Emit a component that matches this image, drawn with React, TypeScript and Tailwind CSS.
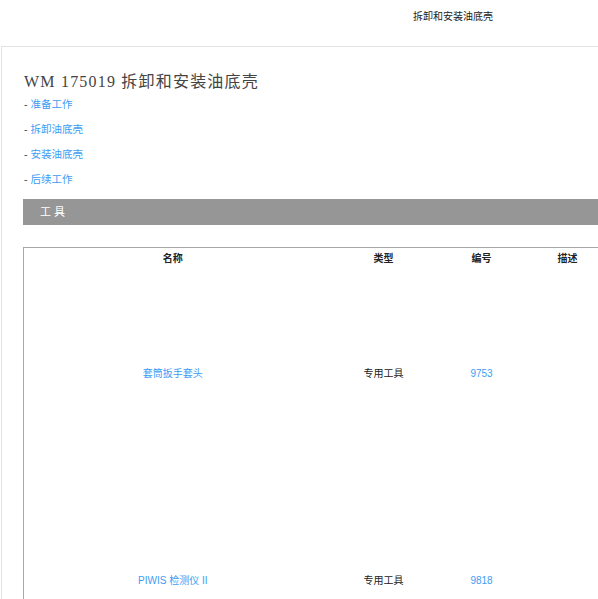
const sans = "font-['Liberation_Sans','Noto_Sans_CJK_SC',sans-serif]";

const steps = ["准备工作", "拆卸油底壳", "安装油底壳", "后续工作"];

const tools = [
  { name: "套筒扳手套头", type: "专用工具", code: "9753", desc: "" },
  { name: "PIWIS 检测仪 II", type: "专用工具", code: "9818", desc: "" },
];

export default function App() {
  return (
    <div className={`w-[598px] h-[599px] overflow-hidden bg-white text-[#333] ${sans}`}>
      {/* top bar */}
      <div className="h-[46px] flex items-start pt-[11px] pl-[413px] text-[10px] leading-[12px] text-[#222]">
        拆卸和安装油底壳
      </div>

      {/* page panel */}
      <div className="ml-px w-[660px] border-l border-t border-[#e3e3e3] pl-[21px] pt-[24px]">
        <h1 className="ml-px font-['Liberation_Serif','Noto_Sans_CJK_SC',serif] text-[16px] leading-[22px] tracking-[1.2px] text-[#444]">
          WM 175019 拆卸和安装油底壳
        </h1>

        <ul className="ml-px mt-[-1px] text-[10.5px] leading-[25px]">
          {steps.map((s) => (
            <li key={s} className="h-[25px]">
              <span className="text-[#444]">- </span>
              <a className="text-[#3d9cf5]">{s}</a>
            </li>
          ))}
        </ul>

        <div className="mt-[7px] h-[26px] bg-[#969696] flex items-center pl-[17px] text-[11px] tracking-[3px] text-white">
          工具
        </div>

        <table className="mt-[22px] border-collapse text-[10px] table-fixed w-[594px] border-l border-t border-[#a8a8a8]">
          <colgroup>
            <col className="w-[298px]" />
            <col className="w-[124px]" />
            <col className="w-[72px]" />
            <col className="w-[100px]" />
          </colgroup>
          <thead>
            <tr className="h-[22px]">
              <th className="font-bold text-[#222]">名称</th>
              <th className="font-bold text-[#222]">类型</th>
              <th className="font-bold text-[#222]">编号</th>
              <th className="font-bold text-[#222]">描述</th>
            </tr>
          </thead>
          <tbody>
            {tools.map((t) => (
              <tr key={t.code} className="h-[207px]">
                <td className="text-center align-middle text-[#3d9cf5]">{t.name}</td>
                <td className="text-center align-middle text-[#222]">{t.type}</td>
                <td className="text-center align-middle text-[#3d9cf5]">{t.code}</td>
                <td className="text-center align-middle">{t.desc}</td>
              </tr>
            ))}
          </tbody>
        </table>
      </div>
    </div>
  );
}
